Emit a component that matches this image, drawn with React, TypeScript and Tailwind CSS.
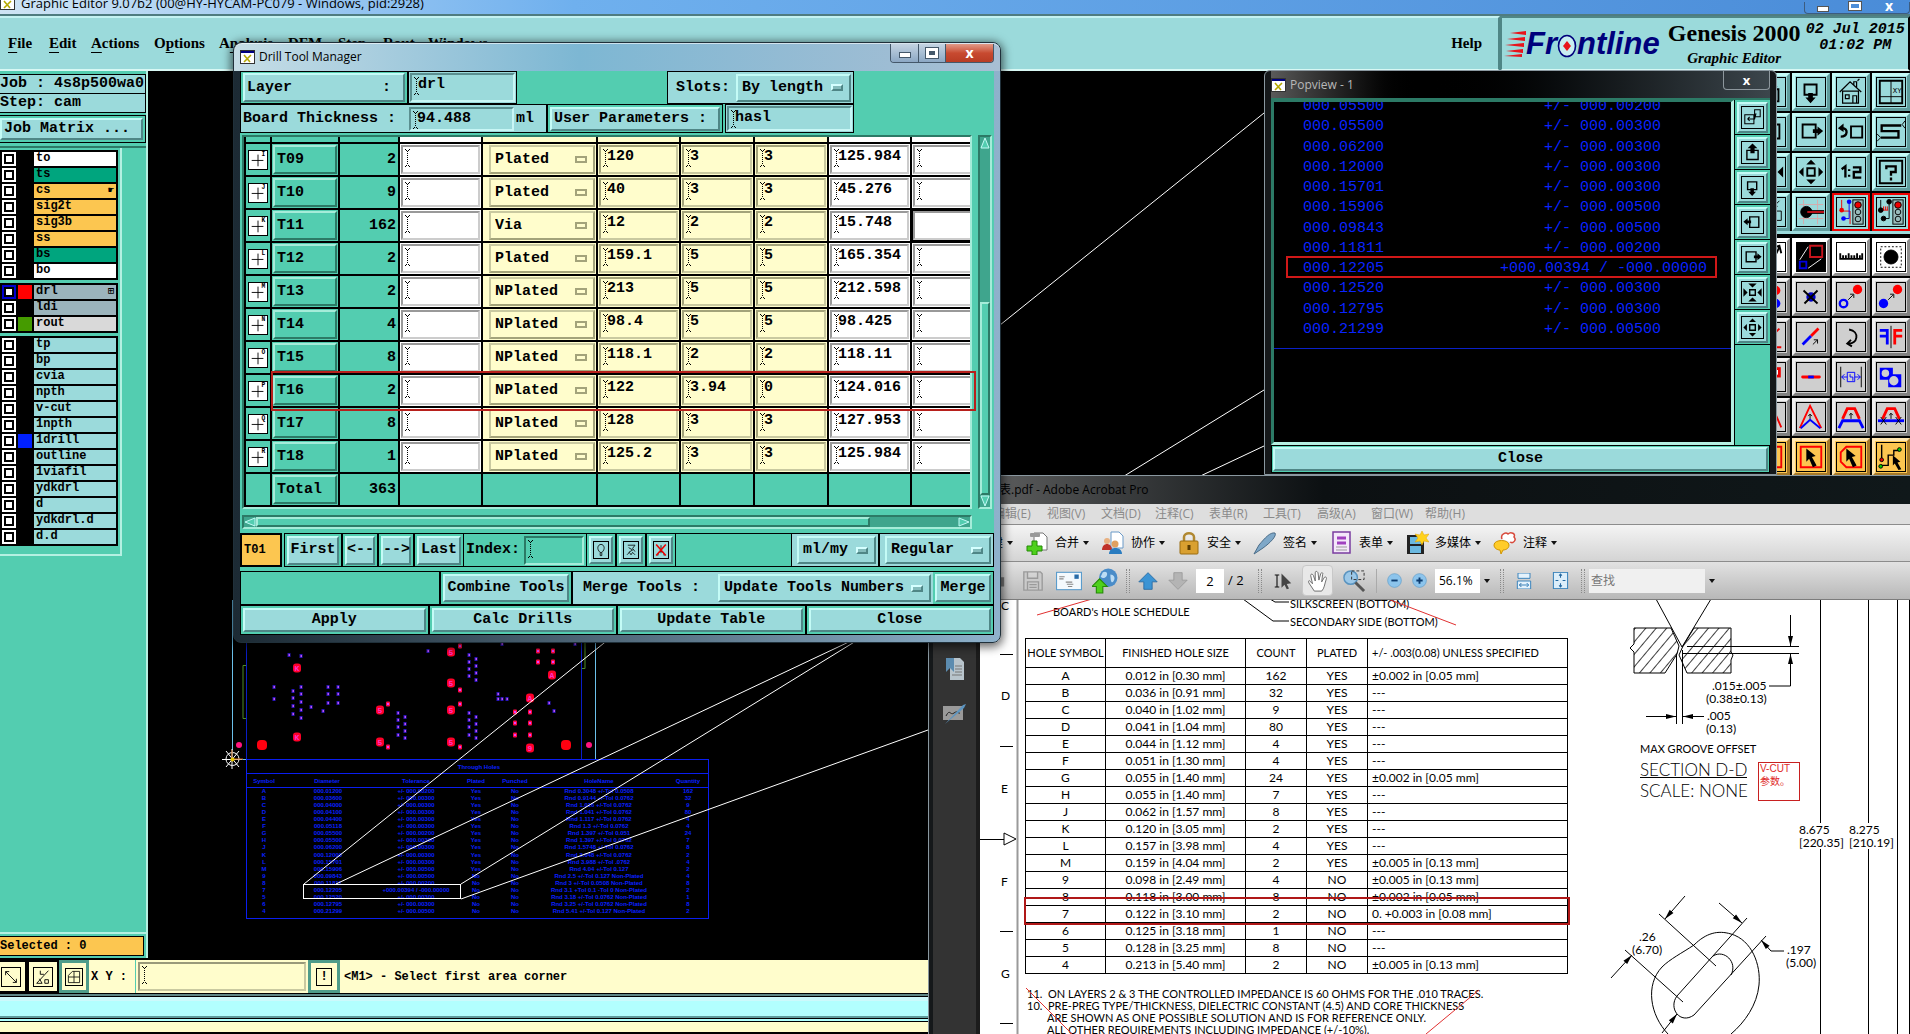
import { ReactNode } from "react";
import clsx from "clsx";

const mono = "font-['Liberation_Mono','DejaVu_Sans_Mono',monospace]";
const ui = "font-['Open_Sans','Noto_Sans','Noto_Sans_CJK_SC',sans-serif]";
const serif = "font-['Liberation_Serif',serif]";
const cad = "font-['Lato','Liberation_Sans',sans-serif]";

const raised =
  "border-2 border-t-[#c4fbf6] border-l-[#c4fbf6] border-r-[#4f8686] border-b-[#4f8686] bg-[#9bdadb]";
const raisedTeal =
  "border-2 border-t-[#a5ecd9] border-l-[#a5ecd9] border-r-[#2c7a66] border-b-[#2c7a66] bg-[#53cdb0]";
const raisedYellow =
  "border-2 border-t-[#c9c9a0] border-l-[#c9c9a0] border-r-[#a3a37a] border-b-[#a3a37a] bg-[#fffdcc]";
const sunken =
  "border-2 border-t-[#5b8f90] border-l-[#5b8f90] border-r-[#c8f6f5] border-b-[#c8f6f5] bg-[#9bdadb]";

/* ---------- shared bits ---------- */

function XIcon() {
  return (
    <svg viewBox="0 0 15 14" className="h-3.5 w-[15px] shrink-0">
      <rect x="0.5" y="0.5" width="14" height="13" fill="#fff" stroke="#333" />
      <rect x="1" y="1" width="13" height="2" fill="#000080" />
      <path d="M4 5l6 7M11 5l-7 7" stroke="#b5a800" strokeWidth="1.6" />
    </svg>
  );
}

function Beam() {
  return (
    <svg viewBox="0 0 5 18" className="pointer-events-none absolute top-0.5 left-0.5 h-[18px] w-[5px]">
      <path d="M0 0.5h1M4 0.5h1M1 1.5h1M3 1.5h1M0 17.5h1M4 17.5h1M1 16.5h1M3 16.5h1" stroke="#000" />
      <path d="M2.5 2v14" stroke="#000" strokeDasharray="1 1" />
    </svg>
  );
}

interface FieldProps {
  label: string;
  value?: string;
  className: string;
  beam?: boolean;
}

function Field({ label, value = "", className, beam = true }: FieldProps) {
  return (
    <div className={clsx("relative", className)}>
      <input
        aria-label={label}
        defaultValue={value}
        className="block h-5 w-full bg-transparent pl-1.5 text-[15px] leading-5 outline-none"
      />
      {beam && <Beam />}
    </div>
  );
}

interface OptionMenuProps {
  label: string;
  value: string;
  className: string;
  mark?: string;
}

function OptionMenu({ label, value, className, mark = "border-t-[#d5ffff] border-l-[#d5ffff] border-r-[#4f8686] border-b-[#4f8686] bg-[#84bcbc]" }: OptionMenuProps) {
  return (
    <div className={clsx("relative flex items-center", className)}>
      <select aria-label={label} defaultValue={value} className="w-full appearance-none bg-transparent pl-1 text-[15px] leading-5 outline-none">
        <option>{value}</option>
      </select>
      <span className={clsx("pointer-events-none absolute right-1.5 h-[7px] w-3 border-2", mark)} />
    </div>
  );
}

/* ---------- menu bar ---------- */

const menus = [
  { pre: "", key: "F", post: "ile", w: "w-[41px]" },
  { pre: "", key: "E", post: "dit", w: "w-[42px]" },
  { pre: "", key: "A", post: "ctions", w: "w-[63px]" },
  { pre: "O", key: "p", post: "tions", w: "w-[65px]" },
  { pre: "A", key: "n", post: "alysis", w: "w-[69px]" },
  { pre: "", key: "D", post: "FM", w: "w-[50px]" },
  { pre: "", key: "S", post: "tep", w: "w-[45px]" },
  { pre: "", key: "R", post: "out", w: "w-[45px]" },
  { pre: "", key: "W", post: "indows", w: "w-[70px]" },
];

function MenuBar() {
  return (
    <header className={clsx("flex h-[57px] shrink-0 border-t-2 border-[#4f7c80] bg-[#9bdadb] text-black", serif)}>
      <nav className="flex flex-1 items-center border-t-2 border-r-2 border-b-2 border-t-[#c4f2f2] border-r-[#4f8686] border-b-[#d8f8f4] pl-2 text-[15px] font-bold">
        {menus.map((m) => (
          <button key={m.key + m.post} className={clsx("text-left", m.w)}>
            {m.pre}
            <span className="underline underline-offset-4">{m.key}</span>
            {m.post}
          </button>
        ))}
        <button className="mr-4 ml-auto">Help</button>
      </nav>
      <div className="flex w-[410px] border-2 border-t-[#4f8686] border-l-[#4f8686] border-b-[#d8f8f4] pl-0.5">
        <Logo />
        <div className="ml-1.5 w-[137px] text-center">
          <div className="text-[24px] leading-[30px] font-bold whitespace-nowrap">Genesis 2000</div>
          <div className="text-[15px] leading-5 font-bold italic">Graphic Editor</div>
        </div>
        <div className={clsx("flex-1 pt-1 text-center text-[15px] leading-4 font-bold whitespace-nowrap italic", mono)}>
          <div>02 Jul 2015</div>
          <div>01:02 PM</div>
        </div>
      </div>
    </header>
  );
}

function Logo() {
  return (
    <div className="flex h-[51px] items-center font-['Liberation_Sans',sans-serif] text-[31px] leading-[30px] font-bold text-[#00007c] italic">
      <svg viewBox="0 0 22 26" className="h-[26px] w-[22px]">
        <path d="M6 2L22 0v4zM3 8L21 6v4zM1 14l19-2v4zM2 20l17-2v4zM0 25l18-2v3z" fill="#e8141c" />
      </svg>
      <span>Fr</span>
      <svg viewBox="0 0 20 24" className="mt-1 h-6 w-5">
        <ellipse cx="10" cy="12" rx="8.5" ry="10.5" fill="#c9eef2" stroke="#00007c" strokeWidth="1.6" />
        <path d="M10 7l4 5-4 5-4-5z" fill="#e8141c" />
      </svg>
      <span>ntline</span>
    </div>
  );
}

/* ---------- layer panel ---------- */

interface Layer {
  name: string;
  bg: string;
  swatch?: string;
  mark?: string;
  active?: boolean;
}

const cyanBg = "bg-[#9bdadb]";
const groups: Layer[][] = [
  [
    { name: "to", bg: "bg-white" },
    { name: "ts", bg: "bg-[#00a57e]" },
    { name: "cs", bg: "bg-[#fcc650]", mark: "☛" },
    { name: "sig2t", bg: "bg-[#fcc650]" },
    { name: "sig3b", bg: "bg-[#fcc650]" },
    { name: "ss", bg: "bg-[#fcc650]" },
    { name: "bs", bg: "bg-[#00a57e]" },
    { name: "bo", bg: "bg-white" },
  ],
  [
    { name: "drl", bg: "bg-[#9bb4bc]", swatch: "bg-[#ff0000]", mark: "⊞", active: true },
    { name: "ldi", bg: "bg-[#9bb4bc]" },
    { name: "rout", bg: "bg-[#d9d9d9]", swatch: "bg-[#459b00]" },
  ],
  ["tp", "bp", "cvia", "npth", "v-cut", "1npth", "1drill", "outline", "1viafil", "ydkdrl", "d", "ydkdrl.d", "d.d"].map(
    (name) => ({ name, bg: cyanBg, swatch: name === "1drill" ? "bg-[#0020ff]" : undefined })
  ),
];

function LayerPanel() {
  return (
    <aside className={clsx("flex w-[148px] shrink-0 flex-col border-r-2 border-r-[#b5f0e2] bg-[#53cdb0] text-black", mono)}>
      <div className="mt-[3px] border border-l-0 border-black bg-[#9bdadb] text-[15px] leading-[18px] font-bold whitespace-nowrap">
        <div className="h-[19px] border-b border-black">Job : 4s8p500wa0</div>
        <div className="h-[18px]">Step: cam</div>
      </div>
      <div className="mt-0.5 border border-l-0 border-black p-0.5 pl-0">
        <button className={clsx("block h-[22px] w-full pl-0.5 text-left text-[15px] leading-[18px] font-bold", raised)}>
          Job Matrix ...
        </button>
      </div>
      <div className="mt-[3px] h-0.5 bg-[#2c7a66]" />
      <div className="flex w-[122px] flex-col gap-[3px] border-r-2 border-b-2 border-[#b5f0e2] pt-0.5 pb-2">
        {groups.map((group, i) => (
          <ul key={i} className="flex w-[118px] flex-col gap-0.5 bg-black px-0.5 py-0.5">
            {group.map((layer) => (
              <li key={layer.name} className="flex h-3.5 gap-0.5">
                <label className={clsx("flex w-3.5 items-center justify-center", layer.active ? "bg-[#0000d0]" : "bg-white")}>
                  <input
                    type="checkbox"
                    aria-label={layer.name}
                    className="h-2.5 w-2.5 appearance-none border-2 border-black bg-white"
                  />
                </label>
                <span className={clsx("w-3.5", layer.swatch)} />
                <span className={clsx("flex flex-1 justify-between px-0.5 text-[12px] leading-[13px] font-bold", layer.bg)}>
                  {layer.name}
                  <span className="text-[10px]">{layer.mark}</span>
                </span>
              </li>
            ))}
          </ul>
        ))}
      </div>
      <div className="mt-auto h-0.5 bg-[#b5f0e2]" />
      <div className="mt-0.5 mr-0.5 mb-0.5 h-5 border border-l-0 border-black bg-[#fcc650] text-[12px] leading-[18px] font-bold">
        Selected : 0
      </div>
    </aside>
  );
}

/* ---------- board canvas ---------- */

const smallHoles = [
  [289, 655], [301, 656], [428, 651], [502, 644], [575, 644],
  [469, 655], [469, 662], [469, 669], [469, 676], [476, 659], [476, 666], [476, 673], [476, 680],
  [274, 687], [301, 687], [328, 687], [338, 687], [274, 699],
  [293, 691], [293, 698], [293, 706], [293, 714], [301, 694], [301, 702], [301, 710], [301, 718],
  [328, 694], [328, 703], [338, 694], [338, 703], [311, 707], [323, 711],
  [398, 713], [398, 720], [398, 727], [398, 735], [405, 717], [405, 724], [405, 731], [405, 738],
  [469, 713], [469, 720], [469, 727], [469, 735], [476, 717], [476, 724], [476, 731], [476, 738],
  [498, 694], [498, 699], [502, 699], [507, 699], [549, 703], [554, 711],
];

const redHoles = [
  [460, 646], [538, 651], [553, 651], [538, 662], [553, 662], [460, 690],
  [388, 704], [388, 747], [460, 704], [460, 747], [515, 712], [515, 723], [515, 735],
  [530, 712], [530, 723], [530, 735],
];

const bigHoles: [number, number, string][] = [
  [451, 652, "5"], [451, 683, "5"], [297, 668, "K"], [297, 737, "K"], [552, 675, "A"], [530, 698, "A"],
  [380, 710, "5"], [380, 742, "5"], [451, 710, "5"], [451, 742, "5"], [530, 748, "9"],
];

const holeReport = [
  ["A", "000.01200", "+/- 000.00200", "Yes", "Rnd 0.3048 +/-Tol 0.0508", "162"],
  ["B", "000.03600", "+/- 000.00300", "Yes", "Rnd 0.9144 +/-Tol 0.0762", "32"],
  ["C", "000.04000", "+/- 000.00300", "Yes", "Rnd 1.016 +/-Tol 0.0762", "9"],
  ["D", "000.04100", "+/- 000.00300", "Yes", "Rnd 1.041 +/-Tol 0.0762", "80"],
  ["E", "000.04400", "+/- 000.00300", "Yes", "Rnd 1.117 +/-Tol 0.0762", "4"],
  ["F", "000.05118", "+/- 000.00300", "Yes", "Rnd 1.3 +/-Tol 0.0762", "4"],
  ["G", "000.05500", "+/- 000.00200", "Yes", "Rnd 1.397 +/-Tol 0.051", "24"],
  ["H", "000.05500", "+/- 000.00300", "Yes", "Rnd 1.397 +/-Tol 0.0762", "7"],
  ["J", "000.06200", "+/- 000.00300", "Yes", "Rnd 1.5748 +/-Tol 0.0762", "8"],
  ["K", "000.12000", "+/- 000.00300", "Yes", "Rnd 3.048 +/-Tol 0.0762", "2"],
  ["L", "000.15701", "+/- 000.00300", "Yes", "Rnd 3.988 +/-Tol .0762", "4"],
  ["M", "000.15906", "+/- 000.00500", "Yes", "Rnd 4.04 +/-Tol 0.127", "2"],
  ["9", "000.09843", "+/- 000.00500", "No", "Rnd 2.5 +/-Tol 0.127 Non-Plated", "4"],
  ["8", "000.11811", "+/- 000.00200", "No", "Rnd 3 +/-Tol 0.0508 Non-Plated", "8"],
  ["7", "000.12205", "+000.00394 / -000.00000", "No", "Rnd 3.1 +Tol 0.1 -Tol 0 Non-Plated", "2"],
  ["5", "000.12520", "+/- 000.00300", "No", "Rnd 3.18 +/-Tol 0.0762 Non-Plated", "1"],
  ["6", "000.12795", "+/- 000.00300", "No", "Rnd 3.25 +/-Tol 0.0762 Non-Plated", "8"],
  ["4", "000.21299", "+/- 000.00500", "No", "Rnd 5.41 +/-Tol 0.127 Non-Plated", "2"],
];

function Board() {
  return (
    <main className="relative flex-1 overflow-hidden bg-black">
      <svg className="absolute inset-0 h-full w-full">
        <g transform="translate(-148 -71)" fill="none">
          <path d="M232.5 600V759.5H595.5V600" stroke="#6bc0ea" />
          <path d="M246.5 600V759M581.5 600V759" stroke="#0a1ec8" />
          <path d="M246 665.5h-3V718.5h3M582 668.5h3V600" stroke="#4c8a28" />
          {smallHoles.map(([x, y]) => (
            <g key={`${x}-${y}`}>
              <rect x={x - 1.5} y={y - 2} width="3" height="4" fill="#2814b8" />
              <rect x={x - 0.5} y={y - 1} width="1.5" height="2" fill="#c050f0" />
            </g>
          ))}
          {redHoles.map(([x, y]) => (
            <g key={`${x}-${y}`}>
              <rect x={x - 2} y={y - 2.5} width="4" height="5" rx="1" fill="#ff0844" />
              <rect x={x - 1} y={y - 1} width="2" height="2" fill="#e040ff" />
            </g>
          ))}
          {bigHoles.map(([x, y, c]) => (
            <g key={`${x}-${y}`}>
              <rect x={x - 4} y={y - 4.5} width="8" height="9" rx="3" fill="#ff0028" />
              <text x={x} y={y + 3} textAnchor="middle" fontSize="8" fontWeight="bold" fill="#ff30c8" className={mono}>
                {c}
              </text>
            </g>
          ))}
          <rect x="257" y="740" width="10" height="10" rx="4" fill="#ff0010" />
          <rect x="561" y="740" width="10" height="10" rx="4" fill="#ff0010" />
          <circle cx="239" cy="745" r="3" fill="#ff1480" />
          <circle cx="589" cy="745" r="3" fill="#ff1480" />
          <g stroke="#0a1ef0">
            <rect x="246.5" y="759.5" width="462" height="159" />
            <path d="M246.5 773.5h462M246.5 787.5h462" />
          </g>
          <g fill="#0a20ff" fontSize="6" fontWeight="bold" textAnchor="middle" className="font-['Liberation_Sans',sans-serif]">
            <text x="479" y="769">Through Holes</text>
            <text x="264" y="783">Symbol</text>
            <text x="327" y="783">Diameter</text>
            <text x="416" y="783">Tolerance</text>
            <text x="476" y="783">Plated</text>
            <text x="515" y="783">Punched</text>
            <text x="599" y="783">HoleName</text>
            <text x="688" y="783">Quantity</text>
            {holeReport.map((r, i) => {
              const y = 793 + Math.round(i * 7.06);
              return (
                <g key={r[0]}>
                  <text x="264" y={y}>{r[0]}</text>
                  <text x="328" y={y}>{r[1]}</text>
                  <text x="416" y={y}>{r[2]}</text>
                  <text x="476" y={y}>{r[3]}</text>
                  <text x="515" y={y}>No</text>
                  <text x="599" y={y}>{r[4]}</text>
                  <text x="688" y={y}>{r[5]}</text>
                </g>
              );
            })}
          </g>
          <g stroke="#fff">
            <rect x="303.5" y="884.5" width="157" height="14" />
            <path d="M304 884L1264 113M336 884L1264 446M461 884L1264 390M461 899L928 730" />
            <path d="M232 749v20M222 759.5h20M226 751l13 16M239 751l-13 16" />
            <circle cx="232.5" cy="759" r="6.5" />
          </g>
          <path d="M232 750v9h11" stroke="#b8560c" />
          <circle cx="232.5" cy="759.5" r="2" fill="#e8c400" />
        </g>
      </svg>
    </main>
  );
}

/* ---------- right tool palette ---------- */

const boxDown = <><path d="M8 18V7h13v11z" fill="none" strokeWidth="2" /><path d="M12 16h5v5h3l-5.500 6-5.500-6h3z" fill="#000" stroke="none" /></>;
const boxRight = <><path d="M6 7h14v14H6z" fill="none" strokeWidth="2" /><path d="M17 12h5v-3l6 5-6 5v-3h-5z" fill="#000" stroke="none" /></>;
const boxLeft = <><path d="M11 7h13v15H11z" fill="none" strokeWidth="2" /><path d="M13 12H8v-3l-6 5 6 5v-3h5z" fill="#000" stroke="none" /></>;
const boxUp = <><path d="M7 12v13h16V12z" fill="none" strokeWidth="2" /><path d="M12 16h6V9h4l-7-7-7 7h4z" fill="#000" stroke="none" /></>;
const spread = <><path d="M11 11h8v8h-8z" fill="none" strokeWidth="2" /><path d="M15 2l5 5H10zM15 28l5-5H10zM2 15l5-5v10zM28 15l-5-5v10z" fill="#000" stroke="none" /></>;
const squeeze = <><path d="M11 11h8v8h-8z" fill="none" strokeWidth="2" /><path d="M15 8l6-6H9zM15 22l6 6H9zM8 15L2 9v12zM22 15l6-6v12z" fill="#000" stroke="none" /></>;
const zoomBoxes = <path d="M4 11h13v13H4zM18 4h8v10h-8zM8 17h10l2-8M8 17l3-3M8 17l3 3" fill="none" strokeWidth="1.5" />;

const trafficLight = (
  <>
    <rect x="17" y="2" width="11" height="26" fill="#9bb" />
    <circle cx="22.500" cy="7.500" r="3.500" fill="#e00" />
    <circle cx="22.500" cy="15" r="3" fill="none" />
    <circle cx="22.500" cy="22.500" r="3" fill="none" />
  </>
);
const pointer = <path d="M10 6l10 8-4 1 5 9-4 2-4-9-3 3z" fill="#000" stroke="none" />;

type Tone = "cyan" | "alert" | "white" | "gray" | "orange";

const tones: Record<Tone, string> = {
  cyan: "bg-[#9bdadb] border-t-[#c4fbf6] border-l-[#c4fbf6] border-r-[#5f9c9c] border-b-[#5f9c9c]",
  alert: "bg-[#9bdadb] border-[#ee0000]",
  white: "bg-white border-t-white border-l-white border-r-[#8f8f8f] border-b-[#8f8f8f]",
  gray: "bg-[#cfcfcf] border-t-[#f2f2f2] border-l-[#f2f2f2] border-r-[#808080] border-b-[#808080]",
  orange: "bg-[#fcc650] border-t-[#ffe6b0] border-l-[#ffe6b0] border-r-[#a5792a] border-b-[#a5792a]",
};

const palette: { tone: Tone; name: string; art: ReactNode }[] = [
  { tone: "cyan", name: "Pan up", art: boxUp },
  { tone: "cyan", name: "Pan down", art: boxDown },
  { tone: "cyan", name: "Home", art: <path d="M6 27V14h17v13zM3 15L14 4l12 11M18 8V4h3v6M22 3l2-2M9 18h4v4H9zM17 27v-8h4v8" fill="none" strokeWidth="1.300" /> },
  { tone: "cyan", name: "XY view", art: <><path d="M3 3h24v24H3z" fill="none" strokeWidth="2" /><path d="M15 3v24M3 20h24" fill="none" /><text x="17" y="16" fontSize="8" stroke="none">XY</text></> },
  { tone: "cyan", name: "Pan left", art: boxLeft },
  { tone: "cyan", name: "Pan right", art: boxRight },
  { tone: "cyan", name: "Previous view", art: <><path d="M15 9h12v12H15z" fill="none" strokeWidth="2" /><path d="M4 20c8 0 8-9 2-9" fill="none" strokeWidth="2.500" /><path d="M1 11l6-5v9z" stroke="none" /></> },
  { tone: "cyan", name: "Serpentine", art: <><path d="M26 8H5v6h18v7H4" fill="none" strokeWidth="2.500" /><path d="M30 3l-3 4 3 4M0 17l4 4-4 4" fill="none" /></> },
  { tone: "cyan", name: "Zoom in", art: squeeze },
  { tone: "cyan", name: "Zoom out", art: spread },
  { tone: "cyan", name: "Scale", art: <path d="M5 12l4-3v12M13 12v2M13 18v2M17 10h8v5h-7v6h8" fill="none" strokeWidth="2.500" /> },
  { tone: "cyan", name: "Help", art: <><path d="M3 3h24v24H3z" fill="none" strokeWidth="2" /><path d="M10 12V9h10v6h-5v4M15 21v3" fill="none" strokeWidth="2.500" /></> },
  { tone: "cyan", name: "Net", art: <path d="M3 8h8v8H3zM18 14h8v10h-8zM14 3l8 6M24 3l-6 6" fill="none" /> },
  { tone: "cyan", name: "Snap", art: <><path d="M7 2v26M22 2v26M2 7h26M2 22h26" stroke="#d8a8a8" /><circle cx="10" cy="15" r="6" fill="#000" /><path d="M10 15h19" stroke="#000" strokeWidth="4" /><path d="M11 15h18" stroke="#c8141c" strokeWidth="2" /></> },
  { tone: "alert", name: "Net check", art: <><path d="M5 2v12h9v14" stroke="#e00" fill="none" /><path d="M13 4v18H7" stroke="#00f" fill="none" /><circle cx="13" cy="4" r="2.500" fill="#00f" stroke="none" /><circle cx="7" cy="22" r="2.500" fill="#00f" stroke="none" /><circle cx="5" cy="13" r="2.500" fill="#e00" stroke="none" />{trafficLight}</> },
  { tone: "alert", name: "Space check", art: <><path d="M4 2v11M13 4v18H7" fill="none" /><path d="M6 13h6M7 9v4M9 9v4M11 9v4" stroke="#e00" /><circle cx="13" cy="4" r="2.500" fill="#000" /><circle cx="7" cy="22" r="2.500" fill="#000" /><circle cx="4" cy="13" r="2.500" fill="#000" />{trafficLight}</> },
  { tone: "white", name: "Select", art: <path d="M6 26C14 24 20 14 24 4M18 5l6-2 2 8" fill="none" strokeWidth="2" /> },
  { tone: "white", name: "Compare", art: <><rect width="30" height="30" fill="#000" /><path d="M14 3h13v12H14z" fill="none" stroke="#c8141c" strokeWidth="2" /><path d="M3 20h7v7H3z" fill="none" stroke="#0000e0" strokeWidth="2" /><path d="M3 18L12 4M12 27l14-10" stroke="#fff" /></> },
  { tone: "white", name: "Measure", art: <path d="M3 17h24M3.500 11v7M6.500 13v5M9.500 13v5M12.500 11v7M15.500 13v5M18.500 13v5M21.500 11v7M24.500 13v5M27 11v7" strokeWidth="2" /> },
  { tone: "white", name: "Pad", art: <><rect x="4" y="4" width="22" height="22" fill="none" strokeDasharray="2 2" /><circle cx="15" cy="15" r="7.500" fill="#000" /></> },
  { tone: "gray", name: "Copy", art: <><circle cx="20" cy="8" r="5" fill="#f00" stroke="none" /><circle cx="20" cy="22" r="5" fill="#00f" stroke="none" /></> },
  { tone: "gray", name: "Delete", art: <><circle cx="15" cy="15" r="5" fill="#0000c8" stroke="none" /><path d="M7 8l15 14M22 8L8 22" strokeWidth="2" /></> },
  { tone: "gray", name: "Move", art: <><circle cx="7" cy="22" r="4" fill="none" stroke="#00f" strokeWidth="2.500" /><circle cx="22" cy="7" r="5" fill="#f00" stroke="none" /><path d="M12 18l5-5M14 12h4v4" fill="none" /></> },
  { tone: "gray", name: "Duplicate", art: <><circle cx="7" cy="22" r="5" fill="#00f" stroke="none" /><circle cx="22" cy="7" r="5" fill="#f00" stroke="none" /><path d="M12 18l5-5M14 12h4v4" fill="none" /></> },
  { tone: "gray", name: "Break", art: <path d="M10 20l14-14M18 26h8" stroke="#e00" strokeWidth="2" /> },
  { tone: "gray", name: "Stretch", art: <><path d="M15 14l8-8" stroke="#f00" strokeWidth="3" /><path d="M6 23l9-9" stroke="#00f" strokeWidth="3" /><path d="M17 23l5-5M18 18h4v4" fill="none" /></> },
  { tone: "gray", name: "Rotate", art: <path d="M13 7c12 2 9 16-1 15M15 18l-4 4 5 3" fill="none" strokeWidth="2" /> },
  { tone: "gray", name: "Mirror", art: <><path d="M3 8h8v15M3 14h8" fill="none" stroke="#00f" strokeWidth="3" /><path d="M27 8h-8v15M27 14h-8" fill="none" stroke="#f00" strokeWidth="3" /><path d="M15 3v24" /></> },
  { tone: "gray", name: "Resize", art: <rect x="14" y="6" width="10" height="8" fill="#fff" stroke="#e00" strokeWidth="3" /> },
  { tone: "gray", name: "Connect", art: <><path d="M6 15h18" stroke="#f00" strokeWidth="3" strokeLinecap="round" /><path d="M12 15h6" stroke="#00f" strokeWidth="3" /></> },
  { tone: "gray", name: "Spacing", art: <><path d="M4 4v22M26 4v22" /><path d="M5 15h6M25 15h-6M5 15l3-3M5 15l3 3M25 15l-3-3M25 15l-3 3M11 10h8v10h-8zM14 12v3h3v4" stroke="#00f" fill="none" /></> },
  { tone: "gray", name: "Surface", art: <><path d="M3 5h14v7h9v14H12v-8H3z" fill="#00f" stroke="none" /><circle cx="9" cy="11" r="4" fill="#cfcfcf" stroke="none" /><circle cx="18" cy="19" r="5" fill="#cfcfcf" stroke="none" /></> },
  { tone: "gray", name: "Angle", art: <path d="M6 26L18 8l8 18" stroke="#e00" strokeWidth="2" fill="none" /> },
  { tone: "gray", name: "Apex", art: <><path d="M3 27L14 3l12 24" stroke="#f00" strokeWidth="2" fill="none" /><path d="M4 27l10-9 11 9" stroke="#00f" strokeWidth="2" fill="none" /><path d="M14 17v-5M12 14l2-2 2 2" fill="none" /></> },
  { tone: "gray", name: "Arc edge", art: <><path d="M6 17L11 6h8l5 11" stroke="#f00" strokeWidth="3" fill="none" /><path d="M2 27l4-8h18l4 8" stroke="#00f" strokeWidth="3" fill="none" /><path d="M15 17v-6M13 13l2-2 2 2" fill="none" /></> },
  { tone: "gray", name: "Chop edge", art: <><path d="M6 17L11 6h8l5 11" stroke="#f00" strokeWidth="3" fill="none" /><path d="M1 19h28" stroke="#00f" strokeWidth="3" fill="none" /><path d="M15 17v-6M13 13l2-2 2 2M4 15l6 8M10 15l-6 8M20 15l6 8M26 15l-6 8" fill="none" /></> },
  { tone: "orange", name: "Frame", art: <path d="M4 4h22v22H4z" fill="none" stroke="#e00" strokeWidth="2" /> },
  { tone: "orange", name: "Frame select", art: <><path d="M4 4h22v22H4z" fill="none" stroke="#f00" strokeWidth="2" />{pointer}</> },
  { tone: "orange", name: "Polygon select", art: <><path d="M10 4h16v22H10l-6-6V10z" fill="none" stroke="#f00" strokeWidth="2" />{pointer}</> },
  { tone: "orange", name: "Net select", art: <><path d="M5 2v14M4 24h8V13h6V8h6" fill="none" strokeWidth="1.500" /><circle cx="5" cy="18" r="2" fill="#e00" /><circle cx="4" cy="25" r="2" fill="#0c0" /><circle cx="24" cy="7" r="2" fill="#0c0" /><path d="M17 13l8 7-3 1 4 7-3 1-4-7-2 2z" fill="#000" stroke="none" /></> },
];

function ToolCell({ tone, name, art }: (typeof palette)[number]) {
  return (
    <button aria-label={name} className={clsx("flex h-[38px] w-[38px] items-center justify-center", tone === "alert" ? "border-2" : "border-3", tones[tone])}>
      <svg viewBox="0 0 30 30" className={clsx("h-[30px] w-[30px] border border-black", mono)} stroke="#000" fill="#000">
        {art}
      </svg>
    </button>
  );
}

function Palette() {
  return (
    <aside className="w-[158px] shrink-0 bg-black pt-0.5">
      <div className="grid grid-cols-4 gap-0.5 border-b-3 border-[#9bdadb]">
        {palette.slice(0, 16).map((p) => <ToolCell key={p.name} {...p} />)}
      </div>
      <div className="mt-1 grid grid-cols-4 gap-0.5">
        {palette.slice(16).map((p) => <ToolCell key={p.name} {...p} />)}
      </div>
    </aside>
  );
}

/* ---------- status bar ---------- */

function StatusBar() {
  const cell = "flex items-center justify-center border-2 border-black bg-[#fffdcc]";
  return (
    <footer className={clsx("shrink-0 bg-black py-0.5 text-black", mono)}>
      <div className="flex h-[33px] bg-[#fffdcc] text-[12px] font-bold">
        <button aria-label="Snap corner" className={clsx("w-[27px] border-l-0 pr-1", cell)}>
          <svg viewBox="0 0 20 20" className="h-5 w-5 border border-black" fill="none" stroke="#000"><path d="M4 4l12 12M4 8V4h4M16 12v4h-4" /></svg>
        </button>
        <button aria-label="Snap angle" className={clsx("w-[32px]", cell)}>
          <svg viewBox="0 0 20 20" className="h-5 w-5 border border-black" fill="none" stroke="#000"><path d="M3 17L16 3M7 3v4h4M3 17h6l-3-5M12 13h4v4h-4z" /></svg>
        </button>
        <button aria-label="Grid" className="flex w-[30px] items-center justify-center border-3 border-[#4f9c8a] bg-[#fffdcc]">
          <svg viewBox="0 0 20 20" className="h-[18px] w-[18px] border border-black" fill="none" stroke="#000"><path d="M3 17V8l5-5h9v14zM3 10h14M10 3v14" /></svg>
        </button>
        <label htmlFor="xy" className="flex w-[47px] items-center border-r border-[#53cdb0] pl-0.5 whitespace-pre">
          X Y :
        </label>
        <div className="relative m-0.5 flex w-[168px] border-2 border-t-[#99997a] border-l-[#99997a] border-r-[#c9c9a0] border-b-[#c9c9a0]">
          <input id="xy" className="w-full bg-transparent pl-1.5 outline-none" />
          <Beam />
        </div>
        <button aria-label="Message" className="flex w-[32px] items-center justify-center border-3 border-[#4f9c8a] bg-[#fffdcc]">
          <span className="flex h-[18px] w-4 items-center justify-center border border-black">!</span>
        </button>
        <output className="flex items-center pl-1">&lt;M1&gt; - Select first area corner</output>
      </div>
      <div className="mt-px h-0.5 bg-[#5f8686]" />
      <div className="mt-px h-[21px] border-t-4 border-b-2 border-t-[#cdf9fb] border-b-[#5f9c9c] bg-[#b2fffe]" />
      <div className="mt-px h-0.5 bg-[#b2fffe]" />
      <div className="mt-px h-[10px] bg-[#fffdcc]" />
    </footer>
  );
}

/* ---------- Popview window ---------- */

const popviewRows = [
  ["000.05500", "+/- 000.00200"],
  ["000.05500", "+/- 000.00300"],
  ["000.06200", "+/- 000.00300"],
  ["000.12000", "+/- 000.00300"],
  ["000.15701", "+/- 000.00300"],
  ["000.15906", "+/- 000.00500"],
  ["000.09843", "+/- 000.00500"],
  ["000.11811", "+/- 000.00200"],
  ["000.12205", "+000.00394 / -000.00000"],
  ["000.12520", "+/- 000.00300"],
  ["000.12795", "+/- 000.00300"],
  ["000.21299", "+/- 000.00500"],
];

const popviewTools = [
  { name: "Zoom box", art: zoomBoxes },
  { name: "Up", art: boxUp },
  { name: "Down", art: boxDown },
  { name: "Left", art: boxLeft },
  { name: "Right", art: boxRight },
  { name: "In", art: squeeze },
  { name: "Out", art: spread },
];

function Popview() {
  return (
    <section className="absolute top-[70px] left-[1264px] flex h-[405px] w-[513px] flex-col rounded-t-md border border-[#8a98a0] bg-[#15181a] px-1.5">
      <div className="flex h-[27px] items-center gap-1 bg-linear-to-r from-[#5a5a5a] via-black via-30% to-[#3c464c]">
        <XIcon />
        <h2 className={clsx("text-[12px] text-[#b8b8b8]", ui)}>Popview - 1</h2>
        <button aria-label="Close window" className="mb-2 ml-auto h-[19px] w-[47px] rounded-b border border-t-0 border-[#8d979d] text-[13px] leading-4 font-bold text-white">
          x
        </button>
      </div>
      <div className="flex h-[347px] border-t-2 border-[#2c7a66]">
        <div className="relative flex-1 overflow-hidden border-t-2 border-r-3 border-b-3 border-l-3 border-[#b5f0e2] border-t-[#2c7a66] border-l-[#2c7a66] bg-black">
          <table className={clsx("-mt-[5px] ml-[29px] h-[243px] w-[404px] text-[15px] leading-4 text-[#0a24ff]", mono)}>
            <tbody>
              {popviewRows.map(([size, tol], i) => (
                <tr key={i}>
                  <td className="w-[190px] p-0">{size}</td>
                  <td className={clsx("p-0", i === 8 ? "text-right" : "pr-[46px] text-right")}>{tol}</td>
                </tr>
              ))}
            </tbody>
          </table>
          <div className="mt-2 h-px bg-[#0a20c8]" />
          <div className="absolute top-[154px] left-3 h-[22px] w-[431px] border-2 border-[#d01818]" />
        </div>
        <div className="w-9 border-l border-black bg-[#53cdb0]">
          {popviewTools.map((t) => (
            <div key={t.name} className="flex h-[35px] items-center justify-center border-b border-black">
              <button aria-label={t.name} className={clsx("flex h-[31px] w-[31px] items-center justify-center", raised)}>
                <svg viewBox="0 0 30 30" className="h-[23px] w-[23px] border border-black" stroke="#000" strokeWidth="1.500">
                  {t.art}
                </svg>
              </button>
            </div>
          ))}
        </div>
      </div>
      <div className="border border-black bg-[#53cdb0] p-px">
        <button className={clsx("block h-[24px] w-full text-[15px] leading-[20px] font-bold text-black", raised, mono)}>Close</button>
      </div>
    </section>
  );
}

/* ---------- Acrobat window ---------- */

const acroMenus = ["文件(F)", "编辑(E)", "视图(V)", "文档(D)", "注释(C)", "表单(R)", "工具(T)", "高级(A)", "窗口(W)", "帮助(H)"];

const acroTasks: { name: string; art: ReactNode }[] = [
  { name: "创建", art: <rect x="4" y="3" width="16" height="18" fill="#c33" /> },
  { name: "合并", art: <><path d="M9 2h9l4 4v13H9z" fill="#fff" stroke="#777" /><rect x="5" y="2" width="10" height="4" rx="1" fill="#999" /><path d="M7 10h5v5h5v5h-5v4H7v-4H2v-5h5z" fill="#4fd01c" stroke="#248a06" /></> },
  { name: "协作", art: <><path d="M10 1h8l4 4v12H10z" fill="#fff" stroke="#6a9ac8" /><circle cx="6" cy="10" r="3" fill="#e8b080" /><path d="M1 19c0-8 10-8 10 0z" fill="#c03028" /><circle cx="14" cy="13" r="3.500" fill="#e0a060" /><path d="M8 23c0-8 13-8 13 0z" fill="#2a7cc0" /></> },
  { name: "安全", art: <><path d="M7 11V6c0-5 10-5 10 0v5" fill="none" stroke="#b08830" strokeWidth="2.500" /><rect x="3" y="10" width="18" height="13" rx="1" fill="#d9a030" stroke="#9a6c10" /><path d="M12 14v5" stroke="#5a3c00" strokeWidth="3" /></> },
  { name: "签名", art: <path d="M1 23L6 14C12 7 17 1 22 2c2 3-5 10-12 15z" fill="#7fa8c8" stroke="#4a6c88" /> },
  { name: "表单", art: <><rect x="4" y="1" width="17" height="21" fill="#f4e8fa" stroke="#7a3ca0" strokeWidth="1.500" /><path d="M8 7h9M8 12h9" stroke="#a040c0" strokeWidth="3" /><path d="M7 16h11M7 19h11" stroke="#999" /></> },
  { name: "多媒体", art: <><rect x="2" y="4" width="17" height="19" fill="#222" /><path d="M5 6h11v7H5zM5 15h11v7H5z" fill="#6ab8e0" /><path d="M17 0l2 4 5-1-3 4 3 4-5-1-2 4-2-4-5 1 3-4-3-4 5 1z" fill="#ffd21c" stroke="#e0a000" strokeWidth=".5" /></> },
  { name: "注释", art: <><path d="M9 8c-2-5 4-7 6-5 3-3 8 0 6 3 3 3-1 7-4 5" fill="#fff" stroke="#d84a3c" strokeWidth="1.500" /><path d="M1 14c0-6 15-6 15 0 0 4-4 5-6 5l-2 4-1-4c-3 0-6-2-6-5z" fill="#ffcc28" stroke="#d09400" /></> },
];

function Caret() {
  return (
    <svg viewBox="0 0 6 4" className="h-1 w-1.5 shrink-0">
      <path d="M0 0h6L3 4z" fill="#111" />
    </svg>
  );
}

function Grip() {
  return <span className="h-6 w-1 shrink-0 border-x border-dotted border-[#8a8a8a]" />;
}

function AcroIcon({ name, className, art }: { name: string; className: string; art: ReactNode }) {
  return (
    <button aria-label={name} className={clsx("shrink-0", className)}>
      <svg viewBox="0 0 24 24" className="w-full" fill="none">
        {art}
      </svg>
    </button>
  );
}

function AcrobatToolbar() {
  return (
    <div className="flex h-[38px] shrink-0 items-center border-b border-[#7c7c7c] bg-linear-to-b from-[#e2e2e2] to-[#b8b8b8] pl-[51px] text-[12px]">
      <AcroIcon name="打印" className="w-[22px]" art={<path d="M2 8h20v10H2zM6 2h12v6H6z" fill="#777" />} />
      <AcroIcon name="保存" className="ml-4 w-[22px]" art={<path d="M2 2h18l2 2v18H2zM6 2v7h11V2M6 22v-9h12v9M8 16h8M8 19h8" fill="#cacaca" stroke="#9a9a9a" strokeWidth="1.500" />} />
      <AcroIcon name="邮件" className="ml-3 w-[26px]" art={<><rect x="0.500" y="4" width="23" height="16" fill="#f4f9fd" stroke="#5a9ccc" /><rect x="17" y="6" width="4" height="4" fill="#2a6ca8" /><path d="M3 8h5M3 10h4M9 13h6M10 15h6M11 17h4" stroke="#888" /></>} />
      <AcroIcon name="上传" className="ml-2.5 w-[26px]" art={<><circle cx="15" cy="9" r="8.500" fill="#4a8cc8" /><path d="M10 4c4-2 5 2 3 4s-4 1-5 0M17 6c3 0 5 3 3 6s-3 0-3-6" fill="#bcdcf4" /><path d="M7 10l7 7h-4v6H4v-6H0z" fill="#4fd01c" stroke="#248a06" /></>} />
      <div className="ml-2 flex"><Grip /></div>
      <AcroIcon name="上一页" className="ml-2 w-5" art={<path d="M12 2l11 11h-6v9H7v-9H1z" fill="#3c94d4" stroke="#2468a0" />} />
      <AcroIcon name="下一页" className="ml-2.5 w-5" art={<path d="M12 22L1 11h6V2h10v9h6z" fill="#b4b4b4" stroke="#989898" />} />
      <input aria-label="页码" defaultValue="2" className="ml-2 h-6 w-7 shrink-0 bg-white text-center text-[13px] outline-none" />
      <span className="ml-1 w-[14px] text-[13px] whitespace-nowrap">/ 2</span>
      <div className="ml-4 flex"><Grip /></div>
      <AcroIcon name="选择" className="ml-3 w-[18px]" art={<><path d="M1 4h6M4 4v16M1 20h6" stroke="#111" strokeWidth="1.500" /><path d="M10 2l13 13-6 1 3 6-3 1-3-6-4 4z" fill="#444" /></>} />
      <button aria-label="手形" className="ml-2.5 flex h-[31px] w-[31px] shrink-0 items-center justify-center rounded-sm border border-[#c8c8c8] bg-[#e8e8e8]">
        <svg viewBox="0 0 24 24" className="h-[22px] w-[22px]" fill="#fff" stroke="#666">
          <path d="M8 23L2 14c-1-3 1-3 2-1l2 2L4 6c0-2 2-2 3 0l2 6V3c0-2 2-2 3 0l1 8 2-7c1-2 3-1 2 1l-1 8 3-5c1-1 3 0 2 2-2 6-2 10-5 13z" />
        </svg>
      </button>
      <AcroIcon name="缩放框" className="ml-2.5 w-[23px]" art={<><circle cx="8" cy="9" r="7" fill="#9cc8e8" stroke="#5a94c0" strokeWidth="1.500" /><path d="M13 14l9 9" stroke="#555" strokeWidth="3" /><path d="M9 2h13v9H9z" stroke="#333" strokeDasharray="3 2" /></>} />
      <span className="ml-2.5 h-6 w-px bg-[#aaa]" />
      <AcroIcon name="缩小" className="ml-2.5 w-[15px]" art={<><circle cx="12" cy="12" r="11" fill="#8cc4ec" stroke="#5c9ac8" /><path d="M7 12h10" stroke="#0c3c70" strokeWidth="3" /></>} />
      <AcroIcon name="放大" className="ml-2.5 w-[15px]" art={<><circle cx="12" cy="12" r="11" fill="#8cc4ec" stroke="#5c9ac8" /><path d="M7 12h10M12 7v10" stroke="#0c3c70" strokeWidth="3" /></>} />
      <input aria-label="缩放比例" defaultValue="56.1%" className="ml-2 h-6 w-[45px] shrink-0 bg-white pl-1 text-[12px] outline-none" />
      <div className="ml-1 flex"><Caret /></div>
      <div className="ml-2.5 flex"><Grip /></div>
      <AcroIcon name="适合宽度" className="ml-3 w-4" art={<path d="M3 0h18v8H3zM2 12h20v12H2zM5 18h14M8 15l-3 3 3 3M16 15l3 3-3 3" fill="#e4f2fc" stroke="#3c84bc" strokeWidth="1.500" />} />
      <AcroIcon name="适合页面" className="ml-5 w-[17px]" art={<><rect x="2" y="0.500" width="20" height="23" fill="#dceefa" stroke="#3c84bc" strokeWidth="1.500" /><path d="M12 3v5M12 21v-5M5 12h4M19 12h-4M10 5l2-2 2 2M10 19l2 2 2-2" stroke="#2468a0" strokeWidth="1.500" /></>} />
      <div className="ml-3 flex"><Grip /></div>
      <input aria-label="查找" placeholder="查找" className="ml-1 h-6 w-[116px] shrink-0 bg-[#f0f0f0] pl-0.5 text-[12px] outline-none placeholder:text-[#777]" />
      <div className="ml-1 flex"><Caret /></div>
    </div>
  );
}

const schedule = [
  ["A", "0.012 in [0.30 mm]", "162", "YES", "±0.002 in [0.05 mm]"],
  ["B", "0.036 in [0.91 mm]", "32", "YES", "---"],
  ["C", "0.040 in [1.02 mm]", "9", "YES", "---"],
  ["D", "0.041 in [1.04 mm]", "80", "YES", "---"],
  ["E", "0.044 in [1.12 mm]", "4", "YES", "---"],
  ["F", "0.051 in [1.30 mm]", "4", "YES", "---"],
  ["G", "0.055 in [1.40 mm]", "24", "YES", "±0.002 in [0.05 mm]"],
  ["H", "0.055 in [1.40 mm]", "7", "YES", "---"],
  ["J", "0.062 in [1.57 mm]", "8", "YES", "---"],
  ["K", "0.120 in [3.05 mm]", "2", "YES", "---"],
  ["L", "0.157 in [3.98 mm]", "4", "YES", "---"],
  ["M", "0.159 in [4.04 mm]", "2", "YES", "±0.005 in [0.13 mm]"],
  ["9", "0.098 in [2.49 mm]", "4", "NO", "±0.005 in [0.13 mm]"],
  ["8", "0.118 in [3.00 mm]", "8", "NO", "±0.002 in [0.05 mm]"],
  ["7", "0.122 in [3.10 mm]", "2", "NO", "0. +0.003 in [0.08 mm]"],
  ["6", "0.125 in [3.18 mm]", "1", "NO", "---"],
  ["5", "0.128 in [3.25 mm]", "8", "NO", "---"],
  ["4", "0.213 in [5.40 mm]", "2", "NO", "±0.005 in [0.13 mm]"],
];

function Arrow({ x, y, angle }: { x: number; y: number; angle: number }) {
  return <path d="M0 0L-10 2.500V-2.500z" fill="#000" stroke="none" transform={`translate(${x} ${y}) rotate(${angle})`} />;
}

function SheetDrawing() {
  return (
    <svg className="pointer-events-none absolute inset-0 h-full w-full">
      <defs>
        <pattern id="hatch" width="8" height="8" patternUnits="userSpaceOnUse" patternTransform="rotate(40)">
          <path d="M0 0v8" stroke="#000" strokeWidth="1.500" />
        </pattern>
      </defs>
      <g transform="translate(-980 -600)" fill="none" stroke="#000">
        <path d="M1017.500 599V1034" stroke="#9a9a9a" strokeWidth="2" />
        <path d="M1000 654.500h13M1000 746.500h13M1000 931.500h13M1000 1023.500h13M980 839.500h24M1004 833v12l12-6z" />
        <path d="M1243 599l30 22h16M1270 599l5 3h14" />
        <path d="M1820.500 599V823M1820.500 849v185M1868.500 599V823M1868.500 849v185M1897.500 599v435M1909.500 599v435" />

        <path d="M1634 628H1671L1679 646L1677 654L1665 673H1634V652L1630 648L1634 644z" fill="url(#hatch)" />
        <path d="M1694 628H1731V652L1733 655L1731 660V673H1687L1679 655L1683 646z" fill="url(#hatch)" />
        <path d="M1656 599L1682 647L1711 599M1687 646.500H1799M1683 653.500H1799M1676.500 654V724M1682.500 650V724" />
        <path d="M1790.500 615V646M1790.500 654V686H1769M1646 716.500h30M1683 716.500h21" />
        <Arrow x={1790.5} y={646} angle={90} />
        <Arrow x={1790.5} y={654} angle={-90} />
        <Arrow x={1676} y={716.5} angle={0} />
        <Arrow x={1683} y={716.5} angle={180} />
        <path d="M1640 777.500h107" />

        <path d="M1668 1034C1650 1015 1645 985 1662 967C1670 959 1682 953 1694 945C1706 933 1718 930 1731 934C1752 940 1761 965 1759 985C1757 1005 1745 1022 1731 1034" />
        <path d="M1747 918L1677 996C1668 1008 1680 1025 1694 1015L1766 936M1713 956C1724 949 1738 962 1731 975" />
        <path d="M1659 914L1716 966M1625 950L1683 1002M1685 896L1665 919M1719 903L1742 923M1611 978L1632 955M1784 951h-13l-10-11M1662 1033L1677 1014" />
        <Arrow x={1665} y={919} angle={131} />
        <Arrow x={1742} y={923} angle={41} />
        <Arrow x={1632} y={955} angle={-48} />
        <Arrow x={1761} y={940} angle={228} />
        <Arrow x={1677} y={1014} angle={-52} />

        <g fill="#000" stroke="none" fontSize="12" className={cad}>
          <text x="1001" y="610">C</text>
          <text x="1001" y="700">D</text>
          <text x="1001" y="793">E</text>
          <text x="1001" y="886">F</text>
          <text x="1001" y="978">G</text>
          <text x="1290" y="608" fontSize="11">SILKSCREEN (BOTTOM)</text>
          <text x="1290" y="626" fontSize="11">SECONDARY SIDE (BOTTOM)</text>
          <text x="1712" y="690">.015±.005</text>
          <text x="1706" y="703">(0.38±0.13)</text>
          <text x="1707" y="720">.005</text>
          <text x="1706" y="733">(0.13)</text>
          <text x="1640" y="753" fontSize="11">MAX GROOVE OFFSET</text>
          <text x="1640" y="776" fontSize="17" fontWeight="300">SECTION D-D</text>
          <text x="1640" y="797" fontSize="17" fontWeight="300">SCALE: NONE</text>
          <text x="1799" y="834">8.675</text>
          <text x="1799" y="847">[220.35]</text>
          <text x="1849" y="834">8.275</text>
          <text x="1849" y="847">[210.19]</text>
          <text x="1639" y="941">.26</text>
          <text x="1632" y="954">(6.70)</text>
          <text x="1787" y="954">.197</text>
          <text x="1786" y="967">(5.00)</text>
        </g>
        <g stroke="#e03030">
          <path d="M1037 615L1092 599M1388 599L1456 625M1026 988L1072 1034M1479 990L1426 1034" />
          <rect x="1758.500" y="762.500" width="41" height="38" stroke="#c82020" />
          <rect x="1025" y="898" width="544" height="26" stroke="#b01818" strokeWidth="2" />
        </g>
        <g fill="#e02828" stroke="none" fontSize="10" className="font-['Liberation_Sans','Noto_Sans_CJK_SC',sans-serif]">
          <text x="1760" y="772">V-CUT</text>
          <text x="1760" y="785">参数。</text>
        </g>
      </g>
    </svg>
  );
}

function Acrobat() {
  return (
    <section className={clsx("absolute top-[475px] right-0 bottom-0 left-[928px] flex flex-col border-t border-l border-[#8a98a0] bg-[#15181a] pl-1 text-black", ui)}>
      <div className="flex h-[28px] shrink-0 items-center bg-linear-to-r from-[#6c6c6c] via-[#0c1012] via-40% to-[#10181a] pl-[66px] text-[12px]">
        <h2>表.pdf - Adobe Acrobat Pro</h2>
      </div>
      <nav className="flex h-5 shrink-0 items-center bg-[#dedede] pl-1.5 text-[12px] text-[#8a8a8a]">
        {acroMenus.map((m) => (
          <button key={m} className="w-[54px] text-left whitespace-nowrap">{m}</button>
        ))}
      </nav>
      <div className="flex h-[38px] shrink-0 items-center gap-3 border-t border-b border-[#8c8c8c] bg-linear-to-b from-[#f4f4f4] to-[#d4d4d4] pl-4 text-[12px]">
        {acroTasks.map((t) => (
          <button key={t.name} className="flex items-center gap-1 whitespace-nowrap">
            <svg viewBox="0 0 24 24" className="mr-0.5 h-6 w-6" fill="none">{t.art}</svg>
            {t.name}
            <Caret />
          </button>
        ))}
      </div>
      <AcrobatToolbar />
      <div className="flex min-h-0 flex-1">
        <aside className="flex w-[47px] shrink-0 flex-col items-center gap-6 border-r-4 border-[#1c1c1c] bg-[#333] pt-[58px]">
          <svg viewBox="0 0 18 22" className="h-[22px] w-[18px]"><path d="M4 0h10l4 4v18H4z" fill="#b8c4cc" /><path d="M0 0h8v14l-4-4-4 4z" fill="#5c8cb0" /><path d="M9 8h7M9 11h7M9 14h7M6 17h10" stroke="#777" /></svg>
          <svg viewBox="0 0 24 20" className="h-5 w-6"><rect y="2" width="20" height="14" fill="#9a9a9a" /><path d="M3 12c4-8 4 0 8-3s4 1 6 0" stroke="#222" fill="none" /><path d="M2 20L20 1l3-1-2 4z" fill="#5c94c0" /></svg>
        </aside>
        <div className={clsx("relative flex-1 overflow-hidden bg-white text-[12px]", cad)}>
          <div className="pl-[45px]">
            <h3 className="h-[38px] pt-1 pl-7 text-[11px] leading-4">BOARD's HOLE SCHEDULE</h3>
            <table className="w-[543px] table-fixed border-collapse text-center leading-[14px]">
              <thead>
                <tr className="h-[29px] text-[11px]">
                  <th className="w-[80px] border border-black p-0 font-normal whitespace-nowrap">HOLE SYMBOL</th>
                  <th className="w-[140px] border border-black p-0 font-normal">FINISHED HOLE SIZE</th>
                  <th className="w-[61px] border border-black p-0 font-normal">COUNT</th>
                  <th className="w-[61px] border border-black p-0 font-normal">PLATED</th>
                  <th className="border border-black p-0 pl-1 text-left font-normal">+/- .003(0.08) UNLESS SPECIFIED</th>
                </tr>
              </thead>
              <tbody>
                {schedule.map((row) => (
                  <tr key={row[0]} className="h-[17px]">
                    {row.map((cell, i) => (
                      <td key={i} className={clsx("border border-black p-0", i === 4 && "pl-1 text-left")}>{cell}</td>
                    ))}
                  </tr>
                ))}
              </tbody>
            </table>
            <div className="mt-3.5 pl-0.5 text-[11px] leading-3 whitespace-pre">
              <p>11.  ON LAYERS 2 & 3 THE CONTROLLED IMPEDANCE IS 60 OHMS FOR THE .010 TRACES.</p>
              <p>10.  PRE-PREG TYPE/THICKNESS, DIELECTRIC CONSTANT (4.5) AND CORE THICKNESS</p>
              <p className="pl-5">ARE SHOWN AS ONE POSSIBLE SOLUTION AND IS FOR REFERENCE ONLY.</p>
              <p className="pl-5">ALL OTHER REQUIREMENTS INCLUDING IMPEDANCE (+/-10%).</p>
            </div>
          </div>
          <SheetDrawing />
        </div>
      </div>
    </section>
  );
}

/* ---------- Drill Tool Manager window ---------- */

interface Drill {
  sym: string;
  tool: string;
  count: string;
  type: string;
  finish: string;
  plus: string;
  minus: string;
  drill: string;
}

const drills: Drill[] = [
  { sym: "I", tool: "T09", count: "2", type: "Plated", finish: "120", plus: "3", minus: "3", drill: "125.984" },
  { sym: "J", tool: "T10", count: "9", type: "Plated", finish: "40", plus: "3", minus: "3", drill: "45.276" },
  { sym: "K", tool: "T11", count: "162", type: "Via", finish: "12", plus: "2", minus: "2", drill: "15.748" },
  { sym: "L", tool: "T12", count: "2", type: "Plated", finish: "159.1", plus: "5", minus: "5", drill: "165.354" },
  { sym: "M", tool: "T13", count: "2", type: "NPlated", finish: "213", plus: "5", minus: "5", drill: "212.598" },
  { sym: "N", tool: "T14", count: "4", type: "NPlated", finish: "98.4", plus: "5", minus: "5", drill: "98.425" },
  { sym: "O", tool: "T15", count: "8", type: "NPlated", finish: "118.1", plus: "2", minus: "2", drill: "118.11" },
  { sym: "P", tool: "T16", count: "2", type: "NPlated", finish: "122", plus: "3.94", minus: "0", drill: "124.016" },
  { sym: "Q", tool: "T17", count: "8", type: "NPlated", finish: "128", plus: "3", minus: "3", drill: "127.953" },
  { sym: "R", tool: "T18", count: "1", type: "NPlated", finish: "125.2", plus: "3", minus: "3", drill: "125.984" },
];

const cellBase = "h-[33px] border-r-2 border-b-2 border-black";
const whiteField = "h-[29px] m-px border-2 border-t-[#999] border-l-[#999] border-r-[#ccc] border-b-[#ccc] bg-white";
const yellowField = "h-[29px] m-px border-2 border-t-[#a3a37a] border-l-[#a3a37a] border-r-[#c9c9a0] border-b-[#c9c9a0] bg-[#fffdcc]";

function DrillRow({ d }: { d: Drill }) {
  return (
    <tr>
      <td className={clsx(cellBase, "p-0 pl-0.5")}>
        <svg viewBox="0 0 20 20" className="h-5 w-5 border border-black bg-white">
          <path d="M3 10.500h13M10 4v13" stroke="#000" />
          <text x="14" y="6" fontSize="7" className={mono}>{d.sym}</text>
        </svg>
      </td>
      <td className={clsx(cellBase, "p-px")}>
        <button className={clsx("block h-[29px] w-full pl-0.5 text-left", raisedTeal)}>{d.tool}</button>
      </td>
      <td className={clsx(cellBase, "p-0 pr-0.5 text-right")}>{d.count}</td>
      <td className={clsx(cellBase, "bg-white p-0")}>
        <Field label={`${d.tool} size`} className={whiteField} />
      </td>
      <td className={clsx(cellBase, "bg-[#fffdcc] p-px pl-1.5")}>
        <OptionMenu
          label={`${d.tool} type`}
          value={d.type}
          className={clsx("h-[29px]", raisedYellow)}
          mark="border-[#a3a37a] bg-[#fffdcc]"
        />
      </td>
      <td className={clsx(cellBase, "bg-[#fffdcc] p-0")}>
        <Field label={`${d.tool} finish size`} value={d.finish} className={yellowField} />
      </td>
      <td className={clsx(cellBase, "bg-[#fffdcc] p-0")}>
        <Field label={`${d.tool} plus tolerance`} value={d.plus} className={yellowField} />
      </td>
      <td className={clsx(cellBase, "bg-[#fffdcc] p-0")}>
        <Field label={`${d.tool} minus tolerance`} value={d.minus} className={yellowField} />
      </td>
      <td className={clsx(cellBase, "bg-white p-0")}>
        <Field label={`${d.tool} drill size`} value={d.drill} className={whiteField} />
      </td>
      <td className={clsx(cellBase, "p-0", d.tool === "T11" ? "bg-black" : "bg-white")}>
        <Field label={`${d.tool} designator`} className={whiteField} beam={d.tool !== "T11"} />
      </td>
    </tr>
  );
}

function DrillTable() {
  return (
    <div className="mt-0.5 ml-0.5 flex h-[374px] gap-1.5">
      <div className="w-[730px] overflow-hidden border-2 border-t-[#2c7a66] border-l-[#2c7a66] border-r-[#a5ecd9] border-b-[#a5ecd9]">
        <table className="w-[747px] table-fixed border-separate border-spacing-0 border-l-2 border-black text-[15px] leading-5">
          <colgroup>
            <col className="w-[26px]" />
            <col className="w-[68px]" />
            <col className="w-[60px]" />
            <col className="w-[83px]" />
            <col className="w-[115px]" />
            <col className="w-[83px]" />
            <col className="w-[74px]" />
            <col className="w-[74px]" />
            <col className="w-[83px]" />
            <col className="w-[79px]" />
          </colgroup>
          <tbody>
            <tr aria-hidden="true">
              {["", "", "", "bg-white", "bg-[#fffdcc]", "bg-[#fffdcc]", "bg-[#fffdcc]", "bg-[#fffdcc]", "bg-white", "bg-white"].map((bg, i) => (
                <td key={i} className={clsx("h-[7px] border-r-2 border-b-2 border-black p-0", bg)} />
              ))}
            </tr>
            {drills.map((d) => <DrillRow key={d.tool} d={d} />)}
            <tr>
              <td className={cellBase} />
              <td className={clsx(cellBase, "p-px")}>
                <button className={clsx("block h-[29px] w-full pl-0.5 text-left", raisedTeal)}>Total</button>
              </td>
              <td className={clsx(cellBase, "p-0 pr-0.5 text-right")}>363</td>
              {[0, 1, 2, 3, 4, 5, 6].map((n) => <td key={n} className={cellBase} />)}
            </tr>
          </tbody>
        </table>
      </div>
      <div className="flex w-3.5 flex-col border-2 border-t-[#2c7a66] border-l-[#2c7a66] border-r-[#a5ecd9] border-b-[#a5ecd9] bg-[#3fa58d]">
        <svg viewBox="0 0 10 12" className="h-3 w-full"><path d="M5 1l4 10H1z" fill="#53cdb0" stroke="#c4fbf6" /></svg>
        <div className={clsx("mt-[153px] flex-1", raisedTeal)} />
        <svg viewBox="0 0 10 12" className="h-3 w-full"><path d="M5 11L1 1h8z" fill="#53cdb0" stroke="#c4fbf6" /></svg>
      </div>
    </div>
  );
}

function DrillManager() {
  const boxed = "border border-black";
  const slot = "flex items-center border border-black p-0.5";
  return (
    <section className="absolute top-[42px] left-[233px] flex h-[601px] w-[768px] flex-col rounded-lg border border-[#20303a] bg-linear-to-r from-[#1c2a34] to-[#8fb2cc] px-1.5 shadow-[0_2px_10px_2px_rgba(0,0,0,0.6)]">
      <div className="-mx-1.5 flex h-[28px] shrink-0 items-start rounded-t-lg border-t border-white/60 bg-linear-to-r from-[#c6dde6] via-[#7db7d3] via-45% to-[#a8bfd4] pl-1.5">
        <div className="flex h-[26px] items-center gap-1"><XIcon />
          <h2 className={clsx("text-[12px] text-black", ui)}>Drill Tool Manager</h2>
        </div>
        <div className="mr-1.5 ml-auto flex h-[19px] overflow-hidden rounded-b border border-t-0 border-[#44586a] text-white">
          <button aria-label="Minimize" className="flex w-7 items-end justify-center border-r border-[#44586a] bg-linear-to-b from-[#c4d4e2] to-[#8ca8c4] pb-1">
            <span className="h-1.5 w-3 border border-[#44586a] bg-white" />
          </button>
          <button aria-label="Maximize" className="flex w-[27px] items-center justify-center border-r border-[#44586a] bg-linear-to-b from-[#c4d4e2] to-[#8ca8c4]">
            <span className="h-2.5 w-3 border-3 border-white bg-[#44586a] outline outline-[#44586a]" />
          </button>
          <button aria-label="Close" className="w-[47px] bg-linear-to-b from-[#e09a88] via-[#c84a30] to-[#b83c24] text-[14px] leading-4 font-bold">x</button>
        </div>
      </div>

      <div className={clsx("flex flex-1 flex-col bg-[#53cdb0] text-[15px] leading-5 font-bold text-black", mono)}>
        <div className="flex h-[33px] shrink-0">
          <div className={clsx("w-[168px]", slot)}>
            <button className={clsx("flex h-[29px] w-full items-center justify-between pr-3 pl-0.5", raised)}>
              <span>Layer</span>
              <span>:</span>
            </button>
          </div>
          <div className={clsx("w-[109px] bg-[#9bdadb] p-px", boxed)}>
            <Field label="Layer" value="drl" className={clsx("h-[29px]", sunken)} />
          </div>
          <div className="ml-[150px] flex w-[187px] items-center justify-between border border-black bg-[#9bdadb] py-px pr-0.5 pl-2">
            <span>Slots:</span>
            <OptionMenu label="Slots" value="By length" className={clsx("h-[28px] w-[115px]", raised)} />
          </div>
        </div>
        <div className="flex h-[29px] shrink-0">
          <div className={clsx("flex w-[307px] items-center bg-[#9bdadb] pl-0.5", boxed)}>
            <label htmlFor="thickness" className="w-[166px]">Board Thickness :</label>
            <div className={clsx("relative h-6 w-[105px]", sunken)}>
              <input id="thickness" defaultValue="94.488" className="block h-5 w-full bg-transparent pl-1.5 leading-5 outline-none" />
              <Beam />
            </div>
            <span className="pl-0.5">ml</span>
          </div>
          <div className={clsx("w-[176px]", slot)}>
            <button className={clsx("h-[24px] w-full pl-0.5 text-left", raised)}>User Parameters :</button>
          </div>
          <div className={clsx("ml-0.5 w-[129px] bg-[#9bdadb] p-px", boxed)}>
            <Field label="User parameters" value="hasl" className={clsx("h-[25px]", sunken)} />
          </div>
        </div>

        <DrillTable />

        <div className="mt-1.5 ml-0.5 flex h-3.5 w-[730px] shrink-0 border-2 border-t-[#2c7a66] border-l-[#2c7a66] border-r-[#a5ecd9] border-b-[#a5ecd9] bg-[#3fa58d]">
          <svg viewBox="0 0 12 10" className="h-full w-3"><path d="M1 5l10-4v8z" fill="#53cdb0" stroke="#c4fbf6" /></svg>
          <div className={clsx("w-[614px]", raisedTeal)} />
          <svg viewBox="0 0 12 10" className="ml-auto h-full w-3"><path d="M11 5L1 1v8z" fill="#53cdb0" stroke="#c4fbf6" /></svg>
        </div>

        <div className="mt-1 flex h-[34px] shrink-0 whitespace-nowrap">
          <output className="flex w-[42px] items-center border-2 border-black bg-[#fcc650] pl-0.5 text-[12px]">T01</output>
          <div className={clsx("ml-0.5 w-[58px]", slot)}><button className={clsx("h-[29px] w-full", raised)}>First</button></div>
          <div className={clsx("w-[36px]", slot)}><button className={clsx("h-[29px] w-full", raised)}>&lt;--</button></div>
          <div className={clsx("w-[36px]", slot)}><button className={clsx("h-[29px] w-full", raised)}>--&gt;</button></div>
          <div className={clsx("w-[50px]", slot)}><button className={clsx("h-[29px] w-full", raised)}>Last</button></div>
          <div className="flex w-[122px] items-center border-y border-black pl-0.5">
            <label htmlFor="index" className="w-[58px]">Index:</label>
            <div className="relative h-[29px] w-[60px] border-2 border-t-[#2c7a66] border-l-[#2c7a66] border-r-[#a5ecd9] border-b-[#a5ecd9]">
              <input id="index" className="h-[18px] w-full bg-transparent pl-[7px] outline-none" />
              <Beam />
            </div>
          </div>
          {[
            { name: "Highlight", art: <path d="M7 13c-5-4-3-10 1-10s6 6 1 10zM7 13v4h2v-4" fill="none" stroke="#000" /> },
            { name: "Undo", art: <path d="M4 4h9l-3 4 3 4M3 16l3-3 2 3 2-3 3 3M5 7l5 3-5 3" fill="none" stroke="#000" /> },
            { name: "Clear", art: <><path d="M4 17c0-7 8-7 8 0M8 4v10" stroke="#000" fill="none" /><path d="M2 3l12 14M14 3L2 17" stroke="#e00" strokeWidth="2" /></> },
          ].map((b) => (
            <div key={b.name} className={clsx("w-[30px]", slot)}>
              <button aria-label={b.name} className={clsx("flex h-[28px] w-full items-center justify-center", raised)}>
                <svg viewBox="0 0 16 20" className="h-[18px] w-4 border border-black">{b.art}</svg>
              </button>
            </div>
          ))}
          <div className="flex-1 border-y border-black" />
          <div className="flex w-[88px] items-center justify-end border border-black bg-[#9bdadb] p-0.5">
            <OptionMenu label="Units" value="ml/my" className={clsx("h-[28px] w-[79px]", raised)} />
          </div>
          <div className="flex w-[115px] items-center justify-end border border-black bg-[#9bdadb] p-0.5">
            <OptionMenu label="Mode" value="Regular" className={clsx("h-[28px] w-[106px]", raised)} />
          </div>
        </div>

        <div className="mt-1 flex h-[34px] shrink-0">
          <div className="flex-1 border border-black" />
          <div className={clsx("w-[132px]", slot)}><button className={clsx("h-[28px] w-full whitespace-nowrap", raised)}>Combine Tools</button></div>
          <div className="flex w-[361px] items-center justify-between border border-r-0 border-black bg-[#9bdadb] pr-0.5 pl-2.5">
            <span>Merge Tools :</span>
            <OptionMenu label="Merge tools" value="Update Tools Numbers" className={clsx("h-[28px] w-[213px]", raised)} />
          </div>
          <div className={clsx("w-[61px] border-l-0", slot)}><button className={clsx("h-[28px] w-full", raised)}>Merge</button></div>
        </div>

        <div className="grid flex-1 grid-cols-4">
          {["Apply", "Calc Drills", "Update Table", "Close"].map((t) => (
            <div key={t} className={slot}>
              <button className={clsx("h-[24px] w-full leading-4", raised)}>{t}</button>
            </div>
          ))}
        </div>
      </div>
      <div className="h-2.5 shrink-0" />
      <div className="pointer-events-none absolute top-[328px] left-[37px] h-[40px] w-[705px] border-2 border-[#b8201c]" />
    </section>
  );
}

export default function App() {
  return (
    <div className="relative flex h-screen flex-col overflow-hidden bg-black">
      <div className="flex h-3.5 shrink-0 items-end overflow-hidden bg-linear-to-r from-[#cfe4f4] via-[#6fb0ee] via-30% to-[#4a8cd8]">
        <div className="flex items-center gap-1.5 pb-px"><XIcon />
          <h1 className={clsx("text-[13px] leading-5 whitespace-nowrap text-black", ui)}>
            Graphic Editor 9.07b2 (00@HY-HYCAM-PC079 - Windows, pid:2928)
          </h1>
        </div>
        <div className="ml-auto flex h-3 gap-5 rounded-b border border-t-0 border-[#3c5c80] px-3">
          <button aria-label="Minimize window" className="mt-1 h-1.5 w-3 border border-[#555] bg-white" />
          <button aria-label="Restore window" className="h-2 w-3 border-2 border-white outline outline-[#555]" />
          <button aria-label="Close window" className="-mt-1 px-1 text-[14px] leading-3 font-bold text-white">x</button>
        </div>
      </div>
      <MenuBar />
      <div className="flex min-h-0 flex-1">
        <LayerPanel />
        <Board />
        <Palette />
      </div>
      <StatusBar />
      <Popview />
      <Acrobat />
      <DrillManager />
    </div>
  );
}
